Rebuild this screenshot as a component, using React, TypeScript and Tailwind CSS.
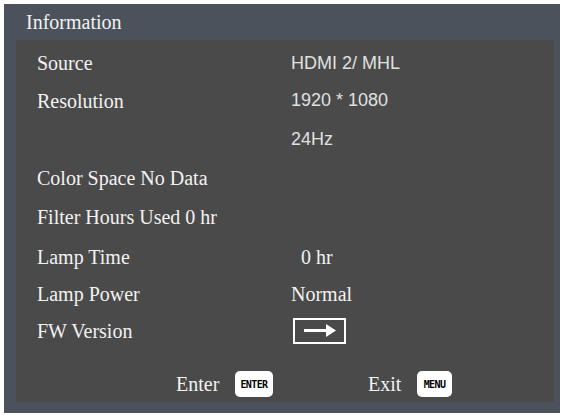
import React from "react"

const rows: { label: string; value?: string; mono?: boolean; arrow?: boolean; h: string }[] = [
  { label: "Source", value: "HDMI 2/ MHL", mono: true, h: "h-[38px]" },
  { label: "Resolution", value: "1920 * 1080", mono: true, h: "h-[37px]" },
  { label: "", value: "24Hz", mono: true, h: "h-[40px]" },
  { label: "Color Space No Data", h: "h-[38px]" },
  { label: "Filter Hours Used 0 hr", h: "h-[40px]" },
  { label: "Lamp Time", value: "\u00a0\u00a00 hr", h: "h-[39px]" },
  { label: "Lamp Power", value: "Normal", h: "h-[36px]" },
  { label: "FW Version", arrow: true, h: "h-[37px]" },
]

const Badge = ({ text, w }: { text: string; w: string }) => (
  <span
    className={`inline-flex h-[26px] items-center justify-center rounded-[5px] bg-white text-[10px] font-black tracking-[-0.6px] text-black [font-family:'DejaVu_Sans_Mono',monospace] ${w}`}
  >
    {text}
  </span>
)

const App = () => {
  return (
    <div className="h-[415px] w-[565px] bg-white pb-[2px] pl-[4px] pr-[5px] pt-[4px] [font-family:'Liberation_Serif',serif]">
      <div className="flex h-full flex-col bg-[#4b525b]">
        <div className="flex h-[36px] items-center pl-[22px] text-[20px] text-[#f2f2f2]">Information</div>
        <div className="mb-[11px] ml-[12px] mr-[6px] flex flex-1 flex-col bg-[#4a4a4a] pl-[21px] pt-[4px]">
          {rows.map((r, i) => (
            <div key={i} className={`flex items-center text-[20px] text-[#f2f2f2] ${r.h}`}>
              <div className="w-[254px]">{r.label}</div>
              {r.value && (
                <div
                  className={
                    r.mono
                      ? "text-[18px] text-[#e0e0e0] [font-family:'Liberation_Sans',sans-serif]"
                      : ""
                  }
                >
                  {r.value}
                </div>
              )}
              {r.arrow && (
                <div className="ml-[2px] flex h-[26px] w-[53px] items-center justify-center border-2 border-white">
                  <svg width="34" height="13" viewBox="0 0 34 13">
                    <rect x="1" y="5" width="24" height="3" fill="white" />
                    <path d="M23 0 L33 6.5 L23 13 Z" fill="white" />
                  </svg>
                </div>
              )}
            </div>
          ))}
          <div className="mt-[20px] flex items-center text-[20px] text-[#f2f2f2]">
            <span className="ml-[139px] w-[59px]">Enter</span>
            <Badge text="ENTER" w="w-[38px]" />
            <span className="ml-[95px] w-[49px]">Exit</span>
            <Badge text="MENU" w="w-[35px]" />
          </div>
        </div>
      </div>
    </div>
  )
}

export default App
